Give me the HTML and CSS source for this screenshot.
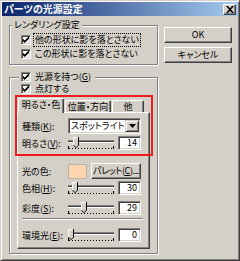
FILE: index.html
```html
<!DOCTYPE html>
<html lang="ja">
<head>
    <meta charset="UTF-8">
    <title>パーツの光源設定</title>
    <link rel="stylesheet" href="styles.css">
</head>
<body>
<div class="window">
    <div class="titlebar">
        <span class="title">パーツの光源設定</span>
        <span class="close">
            <svg width="8" height="7" viewBox="0 0 8 7"><path d="M0 0H2L4 2.3L6 0H8L5 3.5L8 7H6L4 4.7L2 7H0L3 3.5Z" fill="#000"/></svg>
        </span>
    </div>
    <div class="main">
        <div class="left">
            <div class="group group-render">
                <div class="legend">レンダリング設定</div>
                <div class="check-row">
                    <span class="checkbox"><svg width="6" height="6" viewBox="0 0 7 7"><path d="M0 2L2 4L7 -1V2L2 7L0 5Z" fill="#000"/></svg></span>
                    <span class="check-label focus">他の形状に影を落とさない</span>
                </div>
                <div class="check-row">
                    <span class="checkbox"><svg width="6" height="6" viewBox="0 0 7 7"><path d="M0 2L2 4L7 -1V2L2 7L0 5Z" fill="#000"/></svg></span>
                    <span class="check-label">この形状に影を落とさない</span>
                </div>
            </div>

            <div class="group group-light">
                <div class="check-row legend-check">
                    <span class="checkbox"><svg width="6" height="6" viewBox="0 0 7 7"><path d="M0 2L2 4L7 -1V2L2 7L0 5Z" fill="#000"/></svg></span>
                    <span class="check-label">光源を持つ(<u>G</u>)</span>
                </div>
                <div class="check-row">
                    <span class="checkbox"><svg width="6" height="6" viewBox="0 0 7 7"><path d="M0 2L2 4L7 -1V2L2 7L0 5Z" fill="#000"/></svg></span>
                    <span class="check-label">点灯する</span>
                </div>

                <div class="tabs">
                    <div class="tab active">明るさ・色</div>
                    <div class="tab tab-pos">位置・方向</div>
                    <div class="tab tab-other">他</div>
                </div>
                <div class="panel">
                    <div class="field field-kind">
                        <span class="field-label">種類(<u>K</u>):</span>
                        <div class="select">
                            <span>スポットライト</span>
                            <span class="select-button">
                                <svg width="7" height="4" viewBox="0 0 7 4"><path d="M0 0H7L3.5 4Z" fill="#000"/></svg>
                            </span>
                        </div>
                    </div>
                    <div class="field field-bright">
                        <span class="field-label">明るさ(<u>V</u>):</span>
                        <div class="slider">
                            <div class="slider-track"></div>
                            <div class="slider-ticks"></div>
                            <svg class="slider-thumb" style="left: 5px" width="6" height="11" viewBox="0 0 6 11">
                                <path d="M0 0H6V8L3 11L0 8Z" fill="#d4d0c8"/>
                                <path d="M0.5 8.2V0.5H5" fill="none" stroke="#fff"/>
                                <path d="M5.5 0V8.2L3 10.7L0.5 8.2" fill="none" stroke="#000"/>
                            </svg>
                        </div>
                        <div class="edit">14</div>
                    </div>
                    <div class="field field-color">
                        <span class="field-label">光の色:</span>
                        <span class="swatch"></span>
                        <div class="button palette">パレット(<u>C</u>)...</div>
                    </div>
                    <div class="field field-hue">
                        <span class="field-label">色相(<u>H</u>):</span>
                        <div class="slider">
                            <div class="slider-track"></div>
                            <div class="slider-ticks"></div>
                            <svg class="slider-thumb" style="left: 4px" width="6" height="11" viewBox="0 0 6 11">
                                <path d="M0 0H6V8L3 11L0 8Z" fill="#d4d0c8"/>
                                <path d="M0.5 8.2V0.5H5" fill="none" stroke="#fff"/>
                                <path d="M5.5 0V8.2L3 10.7L0.5 8.2" fill="none" stroke="#000"/>
                            </svg>
                        </div>
                        <div class="edit">30</div>
                    </div>
                    <div class="field field-sat">
                        <span class="field-label">彩度(<u>S</u>):</span>
                        <div class="slider">
                            <div class="slider-track"></div>
                            <div class="slider-ticks"></div>
                            <svg class="slider-thumb" style="left: 13px" width="6" height="11" viewBox="0 0 6 11">
                                <path d="M0 0H6V8L3 11L0 8Z" fill="#d4d0c8"/>
                                <path d="M0.5 8.2V0.5H5" fill="none" stroke="#fff"/>
                                <path d="M5.5 0V8.2L3 10.7L0.5 8.2" fill="none" stroke="#000"/>
                            </svg>
                        </div>
                        <div class="edit">29</div>
                    </div>
                    <div class="separator"></div>
                    <div class="field field-ambient">
                        <span class="field-label">環境光(<u>E</u>):</span>
                        <div class="slider">
                            <div class="slider-track"></div>
                            <div class="slider-ticks"></div>
                            <svg class="slider-thumb" style="left: 0px" width="6" height="11" viewBox="0 0 6 11">
                                <path d="M0 0H6V8L3 11L0 8Z" fill="#d4d0c8"/>
                                <path d="M0.5 8.2V0.5H5" fill="none" stroke="#fff"/>
                                <path d="M5.5 0V8.2L3 10.7L0.5 8.2" fill="none" stroke="#000"/>
                            </svg>
                        </div>
                        <div class="edit">0</div>
                    </div>
                </div>
            </div>
        </div>

        <div class="buttons">
            <div class="button">OK</div>
            <div class="button">キャンセル</div>
        </div>
    </div>
    <div class="highlight"></div>
</div>
</body>
</html>
```

FILE: styles.css
```css
body {
    margin: 0;
    background: #d4d0c8;
    font-family: "Noto Sans CJK JP", "Noto Sans", sans-serif;
    font-size: 9px;
    font-feature-settings: "palt";
    color: #000;
}
.window {
    position: relative;
    width: 240px;
    height: 261px;
    box-sizing: border-box;
    border: 1px solid;
    border-color: #d4d0c8 #404040 #404040 #d4d0c8;
    box-shadow: inset 1px 1px #fff, inset -1px -1px #808080;
    padding: 1px;
}
.titlebar {
    height: 14px;
    display: flex;
    align-items: center;
    justify-content: space-between;
    padding: 0 2px 0 2px;
    background: linear-gradient(to right, #0a246a, #a6caf0);
}
.title {
    color: #fff;
    font-weight: bold;
    font-size: 10px;
    line-height: 12px;
}
.close {
    width: 13px;
    height: 11px;
    box-sizing: border-box;
    display: flex;
    align-items: center;
    justify-content: center;
    background: #d4d0c8;
    border: 1px solid;
    border-color: #fff #404040 #404040 #fff;
    box-shadow: inset -1px -1px #808080;
}
.main {
    display: flex;
    gap: 6px;
    padding: 9px 0 0 7px;
}
.left {
    width: 149px;
}

/* group boxes */
.group {
    border: 1px solid #808080;
    box-shadow: inset 1px 1px #fff, 1px 1px #fff;
    padding: 0 7px;
}
.group-render {
    padding-bottom: 3px;
}
.group-light {
    margin-top: 12px;
    padding-bottom: 4px;
}
.legend {
    width: max-content;
    margin: -7px 0 2px -5px;
    padding: 0 2px;
    line-height: 12px;
    background: #d4d0c8;
}

/* checkboxes */
.check-row {
    display: flex;
    align-items: flex-start;
    height: 14px;
    padding-left: 4px;
}
.legend-check {
    width: max-content;
    height: 12px;
    margin: -8px 0 0 2px;
    padding: 0 2px;
    background: #d4d0c8;
}
.checkbox {
    width: 10px;
    height: 10px;
    box-sizing: border-box;
    margin-top: 2px;
    display: flex;
    align-items: center;
    justify-content: center;
    background: #fff;
    border: 1px solid;
    border-color: #808080 #fff #fff #808080;
    box-shadow: inset 1px 1px #404040, inset -1px -1px #d4d0c8;
}
.check-label {
    margin: 0 0 0 2px;
    padding: 0 1px;
    border: 1px dotted transparent;
    line-height: 12px;
    white-space: nowrap;
}
.check-label.focus {
    border-color: #000;
}

/* tabs */
.tabs {
    display: flex;
    align-items: flex-end;
    height: 12px;
    margin-top: 4px;
    padding-left: 1px;
}
.tab {
    width: 46px;
    height: 12px;
    box-sizing: border-box;
    margin-left: 1px;
    border: 1px solid;
    border-bottom: none;
    border-color: #fff #404040 transparent #fff;
    border-radius: 2px 2px 0 0;
    box-shadow: inset -1px 0 #808080;
    text-align: center;
    line-height: 11px;
    white-space: nowrap;
}
.tab.active {
    position: relative;
    height: 15px;
    margin: 0 0 -1px 0;
    background: linear-gradient(#d4d0c8, #d4d0c8) left bottom / 100% 2px no-repeat;
}
.tab-other {
    width: 32px;
}
.panel {
    height: 137px;
    box-sizing: border-box;
    border: 1px solid;
    border-color: #fff #404040 #404040 #fff;
    box-shadow: inset -1px -1px #808080;
    padding: 5px 8px 0 4px;
}

/* fields */
.field {
    display: flex;
    align-items: center;
    height: 14px;
    white-space: nowrap;
}
.field-label {
    width: 46px;
    flex: none;
}
.field-kind {
    height: 16px;
}
.field-bright {
    margin-top: 2px;
}
.field-color {
    height: 16px;
    margin-top: 13px;
}
.field-hue {
    margin-top: 2px;
}
.field-sat {
    margin-top: 6px;
}
.field-ambient {
    margin-top: 8px;
}
.separator {
    margin: 3px -2px 0 0;
    border-top: 1px solid #808080;
    border-bottom: 1px solid #fff;
}
.select {
    width: 73px;
    height: 16px;
    box-sizing: border-box;
    display: flex;
    align-items: center;
    justify-content: space-between;
    padding-left: 2px;
    background: #fff;
    border: 1px solid;
    border-color: #808080 #fff #fff #808080;
    box-shadow: inset 1px 1px #404040, inset -1px -1px #d4d0c8;
    line-height: 12px;
}
.select-button {
    width: 14px;
    height: 12px;
    box-sizing: border-box;
    margin-right: 1px;
    display: flex;
    align-items: center;
    justify-content: center;
    background: #d4d0c8;
    border: 1px solid;
    border-color: #d4d0c8 #404040 #404040 #d4d0c8;
    box-shadow: inset 1px 1px #fff, inset -1px -1px #808080;
}
.slider {
    position: relative;
    width: 46px;
    height: 14px;
    margin-right: 4px;
}
.slider-track {
    margin-top: 4px;
    height: 1px;
    background: #404040;
    border-top: 1px solid #808080;
    border-bottom: 1px solid #fff;
}
.slider-ticks {
    margin-top: 3px;
    height: 3px;
    box-sizing: border-box;
    border-left: 1px solid #000;
    border-right: 1px solid #000;
    background: repeating-linear-gradient(to right, #000 0 1px, transparent 1px 3px) left bottom / 100% 1px no-repeat;
}
.slider-thumb {
    position: absolute;
    top: 1px;
}
.edit {
    width: 23px;
    height: 14px;
    box-sizing: border-box;
    padding-right: 3px;
    background: #fff;
    border: 1px solid;
    border-color: #808080 #fff #fff #808080;
    box-shadow: inset 1px 1px #404040, inset -1px -1px #d4d0c8;
    text-align: right;
    line-height: 12px;
}
.swatch {
    width: 19px;
    height: 15px;
    box-sizing: border-box;
    background: #fcd6b0;
    border: 1px solid #b8b4ac;
}

/* buttons */
.buttons {
    display: flex;
    flex-direction: column;
    gap: 4px;
    margin-top: 2px;
}
.button {
    width: 68px;
    height: 16px;
    box-sizing: border-box;
    border: 1px solid;
    border-color: #fff #404040 #404040 #fff;
    box-shadow: inset -1px -1px #808080;
    text-align: center;
    line-height: 14px;
    white-space: nowrap;
}
.button.palette {
    width: 50px;
    margin-left: 4px;
    letter-spacing: -0.4px;
    overflow: hidden;
}

.highlight {
    position: absolute;
    left: 14px;
    top: 94px;
    width: 138px;
    height: 61px;
    box-sizing: border-box;
    border: 2px solid #ee1c1c;
}
```
